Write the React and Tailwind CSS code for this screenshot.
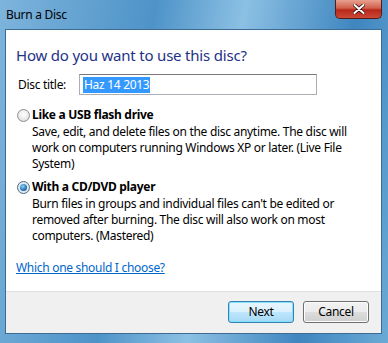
export default function App() {
  const font = { fontFamily: '"Segoe UI", "Noto Sans", "Open Sans", sans-serif' };
  return (
    <div
      className="w-[388px] h-[343px] flex flex-col bg-[linear-gradient(100deg,#7db4dc_0%,#4e93c8_35%,#8cc0e4_55%,#3f86bf_80%,#6aaad6_100%)] text-[12px] tracking-[-0.3px] text-black"
      style={font}
    >
      <div className="h-[29px] flex items-start justify-between pl-[6px] pr-[6px]">
        <div className="mt-[7px] text-[12px] leading-[16px] text-black">Burn a Disc</div>
        <div className="w-[47px] h-[19px] rounded-b-[5px] border border-t-0 border-[#5a1a14] bg-[linear-gradient(180deg,#e8a08f_0%,#d0604c_45%,#b8271a_55%,#c94a36_100%)] flex items-center justify-center">
          <svg width="12" height="10" viewBox="0 0 12 10">
            <path d="M1.5 1 L10.5 9 M10.5 1 L1.5 9" stroke="#3a1010" strokeWidth="3.6" strokeLinecap="round" />
            <path d="M1.5 1 L10.5 9 M10.5 1 L1.5 9" stroke="#ffffff" strokeWidth="2" strokeLinecap="round" />
          </svg>
        </div>
      </div>
      <div className="ml-[5px] mr-[6px] h-[305px] border border-[#3d6b94] bg-white flex flex-col">
        <div className="flex-1 flex flex-col px-[10px] pt-[15px]">
          <div className="text-[15px] leading-[20px] tracking-[-0.2px] text-[#1e3287]">How do you want to use this disc?</div>
          <div className="flex items-center mt-[9px]">
            <div className="w-[63px] pl-[2px]">Disc title:</div>
            <div className="w-[238px] h-[21px] border border-[#abadb3] border-t-[#7a7a7a] flex items-center px-[3px]">
              <span className="bg-[#3399ff] text-white leading-[16px] px-[1px]">Haz 14 2013</span>
            </div>
          </div>
          <div className="flex mt-[11px]">
            <div className="w-[16px] pt-[3px] pl-[1px]">
              <div className="w-[13px] h-[13px] rounded-full border border-[#8e8f8f] bg-[radial-gradient(circle_at_50%_40%,#ffffff_0%,#e8e8e8_60%,#c8c8c8_100%)]" />
            </div>
            <div className="flex flex-col">
              <div className="font-bold leading-[18px]">Like a USB flash drive</div>
              <div className="leading-[16px] w-[335px]">
                Save, edit, and delete files on the disc anytime. The disc will work on computers running Windows XP or later. (Live File System)
              </div>
            </div>
          </div>
          <div className="flex mt-[6px]">
            <div className="w-[16px] pt-[3px] pl-[1px]">
              <div className="w-[13px] h-[13px] rounded-full border border-[#4f6a7f] bg-[#dfe9f1] flex items-center justify-center">
                <div className="w-[7px] h-[7px] rounded-full bg-[radial-gradient(circle_at_40%_35%,#8fd0f5_0%,#2b7bbd_55%,#0f3d66_100%)]" />
              </div>
            </div>
            <div className="flex flex-col">
              <div className="font-bold leading-[18px]">With a CD/DVD player</div>
              <div className="leading-[16px] w-[335px]">
                Burn files in groups and individual files can't be edited or removed after burning. The disc will also work on most computers. (Mastered)
              </div>
            </div>
          </div>
          <div className="mt-[15px] text-[#0066cc] underline">Which one should I choose?</div>
        </div>
        <div className="h-[42px] border-t border-[#dfdfdf] bg-[#f0f0f0] flex items-start justify-end gap-[9px] pr-[12px] pt-[9px]">
          <button className="w-[66px] h-[22px] rounded-[3px] border border-[#3c7fb1] bg-[linear-gradient(180deg,#eaf6fd_0%,#d9f0fc_50%,#bee6fd_51%,#a7d9f5_100%)] shadow-[inset_0_0_0_1px_#7ee2fd]" style={font}>
            Next
          </button>
          <button className="w-[66px] h-[22px] rounded-[3px] border border-[#707070] bg-[linear-gradient(180deg,#f2f2f2_0%,#ebebeb_50%,#dddddd_51%,#cfcfcf_100%)] shadow-[inset_0_0_0_1px_#fcfcfc]" style={font}>
            Cancel
          </button>
        </div>
      </div>
    </div>
  );
}
